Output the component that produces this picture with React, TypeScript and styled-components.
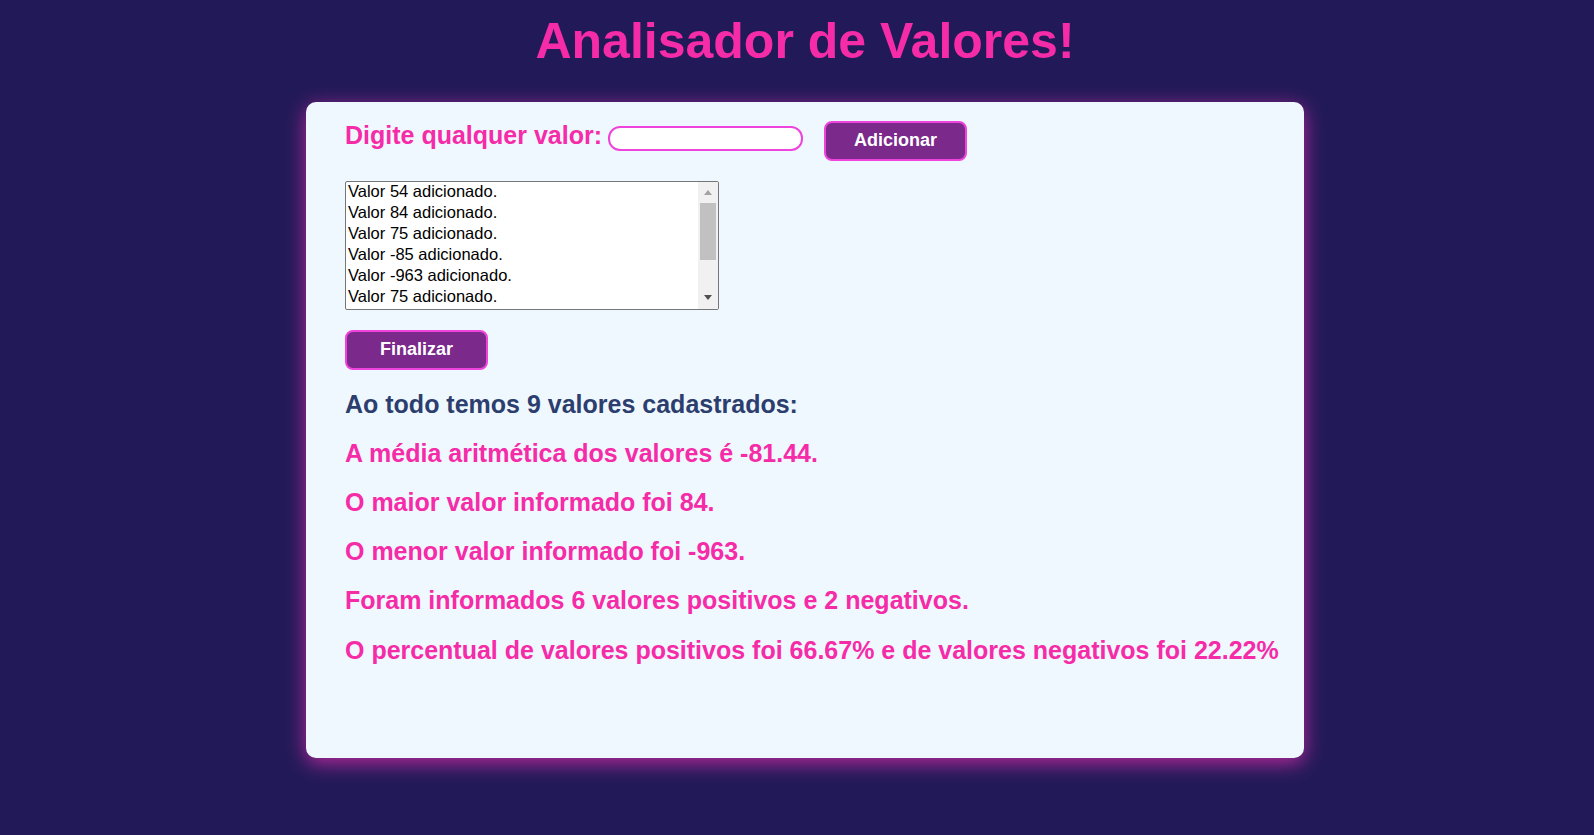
import React from "react";
import styled, { createGlobalStyle } from "styled-components";

const GlobalStyle = createGlobalStyle`
  html, body {
    margin: 0;
    padding: 0;
    background: #221a58;
  }
  body {
    font-family: "Liberation Sans", Arial, sans-serif;
    overflow: hidden;
  }
`;

const Page = styled.div`
  box-sizing: border-box;
  width: 100%;
  min-height: 835px;
  padding: 12px 0 0 16px;
  background: #221a58;
`;

const Title = styled.h1`
  margin: 0;
  text-align: center;
  font-size: 50px;
  font-weight: 700;
  line-height: normal;
  color: #f52ba7;
`;

const Card = styled.main`
  box-sizing: border-box;
  width: 998px;
  height: 656px;
  margin: 32px auto 0;
  padding: 19px 39px;
  background: #f0f8ff;
  border-radius: 10px;
  box-shadow: 0 5px 20px #b82a9c;
`;

const InputRow = styled.div`
  display: flex;
  align-items: flex-start;
`;

const Label = styled.label`
  margin-top: -0.5px;
  font-size: 25px;
  font-weight: 700;
  line-height: normal;
  color: #f52ba7;
  white-space: nowrap;
`;

const ValueInput = styled.input`
  box-sizing: border-box;
  width: 195px;
  height: 25px;
  margin: 4.5px 0 0 6px;
  padding: 0 10px;
  border: 2px solid #ee44dd;
  border-radius: 12px;
  background: #ffffff;
  outline: none;
`;

const ActionButton = styled.button<{ $gap?: number }>`
  box-sizing: border-box;
  width: 143px;
  height: 40px;
  margin-left: ${(p) => p.$gap ?? 0}px;
  padding: 0 0 2px;
  border: 2px solid #ee44dd;
  border-radius: 8px;
  background: #7b2a8b;
  color: #ffffff;
  font-family: "Liberation Sans", Arial, sans-serif;
  font-size: 18px;
  font-weight: 700;
  cursor: pointer;
`;

const ListBox = styled.div`
  box-sizing: border-box;
  display: flex;
  width: 374px;
  height: 129px;
  margin: 20px 0;
  border: 1px solid #767676;
  border-radius: 2px;
  background: #ffffff;
  overflow: hidden;
`;

const ListRows = styled.div`
  flex: 1;
  padding-top: 1px;
`;

const ListItem = styled.div`
  height: 21px;
  padding: 0 2px;
  font-family: "Liberation Sans", Arial, sans-serif;
  font-size: 16.5px;
  line-height: 17px;
  color: #000000;
  white-space: nowrap;
`;

const ScrollBar = styled.div`
  display: flex;
  flex-direction: column;
  width: 20px;
  background: #f1f1f1;
`;

const ArrowButton = styled.div<{ $dir: "up" | "down" }>`
  display: flex;
  justify-content: center;
  height: 17px;
  padding-top: ${(p) => (p.$dir === "up" ? 8 : 3)}px;
  box-sizing: border-box;

  &::before {
    content: "";
    width: 0;
    height: 0;
    border-left: 4.5px solid transparent;
    border-right: 4.5px solid transparent;
    ${(p) =>
      p.$dir === "up"
        ? "border-bottom: 5px solid #a3a3a3;"
        : "border-top: 5px solid #505050;"}
  }
`;

const Track = styled.div`
  flex: 1;
  padding: 4px 2px 0 2px;
`;

const Thumb = styled.div`
  height: 57px;
  background: #c1c1c1;
`;

const Results = styled.section`
  margin-top: 19.5px;
`;

const ResultLine = styled.p<{ $tone?: "navy" | "pink" }>`
  margin: 0 0 20px;
  font-size: 25px;
  font-weight: 700;
  line-height: 29.2px;
  color: ${(p) => (p.$tone === "navy" ? "#2c3e6e" : "#f52ba7")};
  white-space: nowrap;
`;

const values = [54, 84, 75, -85, -963, 75, 12, 0, 15];
const visibleRows = values.slice(0, 6);

export default function App() {
  const total = values.length;
  const sum = values.reduce((a, b) => a + b, 0);
  const avg = (sum / total).toFixed(2);
  const max = Math.max(...values);
  const min = Math.min(...values);
  const pos = values.filter((v) => v > 0).length;
  const neg = values.filter((v) => v < 0).length;
  const pPos = ((pos / total) * 100).toFixed(2);
  const pNeg = ((neg / total) * 100).toFixed(2);

  return (
    <>
      <GlobalStyle />
      <Page>
        <Title>Analisador de Valores!</Title>
        <Card>
          <InputRow>
            <Label htmlFor="valor">Digite qualquer valor:</Label>
            <ValueInput id="valor" type="number" />
            <ActionButton $gap={21}>Adicionar</ActionButton>
          </InputRow>
          <ListBox role="listbox">
            <ListRows>
              {visibleRows.map((v, i) => (
                <ListItem key={i} role="option">
                  Valor {v} adicionado.
                </ListItem>
              ))}
            </ListRows>
            <ScrollBar aria-hidden="true">
              <ArrowButton $dir="up" />
              <Track>
                <Thumb />
              </Track>
              <ArrowButton $dir="down" />
            </ScrollBar>
          </ListBox>
          <ActionButton>Finalizar</ActionButton>
          <Results>
            <ResultLine $tone="navy">Ao todo temos {total} valores cadastrados:</ResultLine>
            <ResultLine>A média aritmética dos valores é {avg}.</ResultLine>
            <ResultLine>O maior valor informado foi {max}.</ResultLine>
            <ResultLine>O menor valor informado foi {min}.</ResultLine>
            <ResultLine>
              Foram informados {pos} valores positivos e {neg} negativos.
            </ResultLine>
            <ResultLine>
              O percentual de valores positivos foi {pPos}% e de valores negativos foi {pNeg}%
            </ResultLine>
          </Results>
        </Card>
      </Page>
    </>
  );
}
